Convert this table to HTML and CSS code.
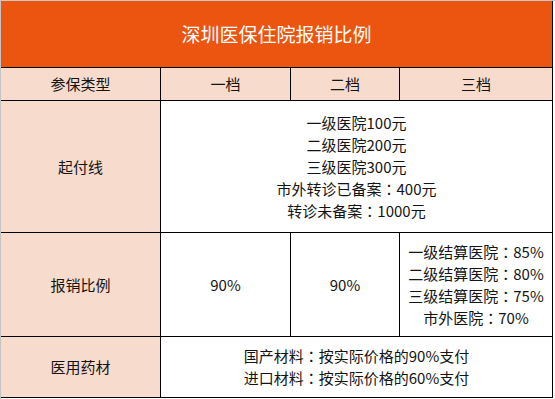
FILE: index.html
```html
<!DOCTYPE html>
<html lang="zh-CN">
<head>
<meta charset="utf-8">
<title>深圳医保住院报销比例</title>
<link rel="stylesheet" href="styles.css">
</head>
<body>
<div class="sheet">
  <div class="grid">
    <div class="cell title">深圳医保住院报销比例</div>

    <div class="cell head">参保类型</div>
    <div class="cell head">一档</div>
    <div class="cell head">二档</div>
    <div class="cell head">三档</div>

    <div class="cell label">起付线</div>
    <div class="cell span3 lines">
      <div>一级医院100元</div>
      <div>二级医院200元</div>
      <div>三级医院300元</div>
      <div>市外转诊已备案<span class="colon" lang="zh-TW">：</span>400元</div>
      <div>转诊未备案<span class="colon" lang="zh-TW">：</span>1000元</div>
    </div>

    <div class="cell label">报销比例</div>
    <div class="cell">90%</div>
    <div class="cell">90%</div>
    <div class="cell lines">
      <div>一级结算医院<span class="colon" lang="zh-TW">：</span>85%</div>
      <div>二级结算医院<span class="colon" lang="zh-TW">：</span>80%</div>
      <div>三级结算医院<span class="colon" lang="zh-TW">：</span>75%</div>
      <div>市外医院<span class="colon" lang="zh-TW">：</span>70%</div>
    </div>

    <div class="cell label">医用药材</div>
    <div class="cell span3 lines">
      <div>国产材料<span class="colon" lang="zh-TW">：</span>按实际价格的90%支付</div>
      <div>进口材料<span class="colon" lang="zh-TW">：</span>按实际价格的60%支付</div>
    </div>
  </div>
</div>
</body>
</html>
```

FILE: styles.css
```css
html, body {
  margin: 0;
  padding: 0;
  background: #ffffff;
}

body {
  font-family: "Noto Sans CJK SC", "Noto Sans", sans-serif;
  color: #141414;
}

.sheet {
  width: 554px;
  height: 398px;
  border-top: 1px solid #c9c9c9;
  border-left: 1px solid #c4c4c4;
}

.grid {
  display: grid;
  grid-template-columns: 160px 130px 109px 153px;
  grid-template-rows: 67px 33px 132px 104px 61px;
}

.cell {
  box-sizing: border-box;
  border-right: 1px solid #000;
  border-bottom: 1px solid #000;
  display: flex;
  flex-direction: column;
  align-items: center;
  justify-content: center;
  font-size: 15px;
  line-height: 22px;
  text-align: center;
  white-space: nowrap;
}

.title {
  grid-column: 1 / -1;
  background: #ec550f;
  color: #ffffff;
  font-size: 19px;
  line-height: 24px;
}

.head {
  background: #f7dbcc;
}

.label {
  background: #f7dbcc;
}

.span3 {
  grid-column: 2 / span 3;
}

.lines > div {
  height: 22px;
}

.colon {
  font-family: "Noto Sans CJK TC", "Noto Sans CJK SC", sans-serif;
}
```
